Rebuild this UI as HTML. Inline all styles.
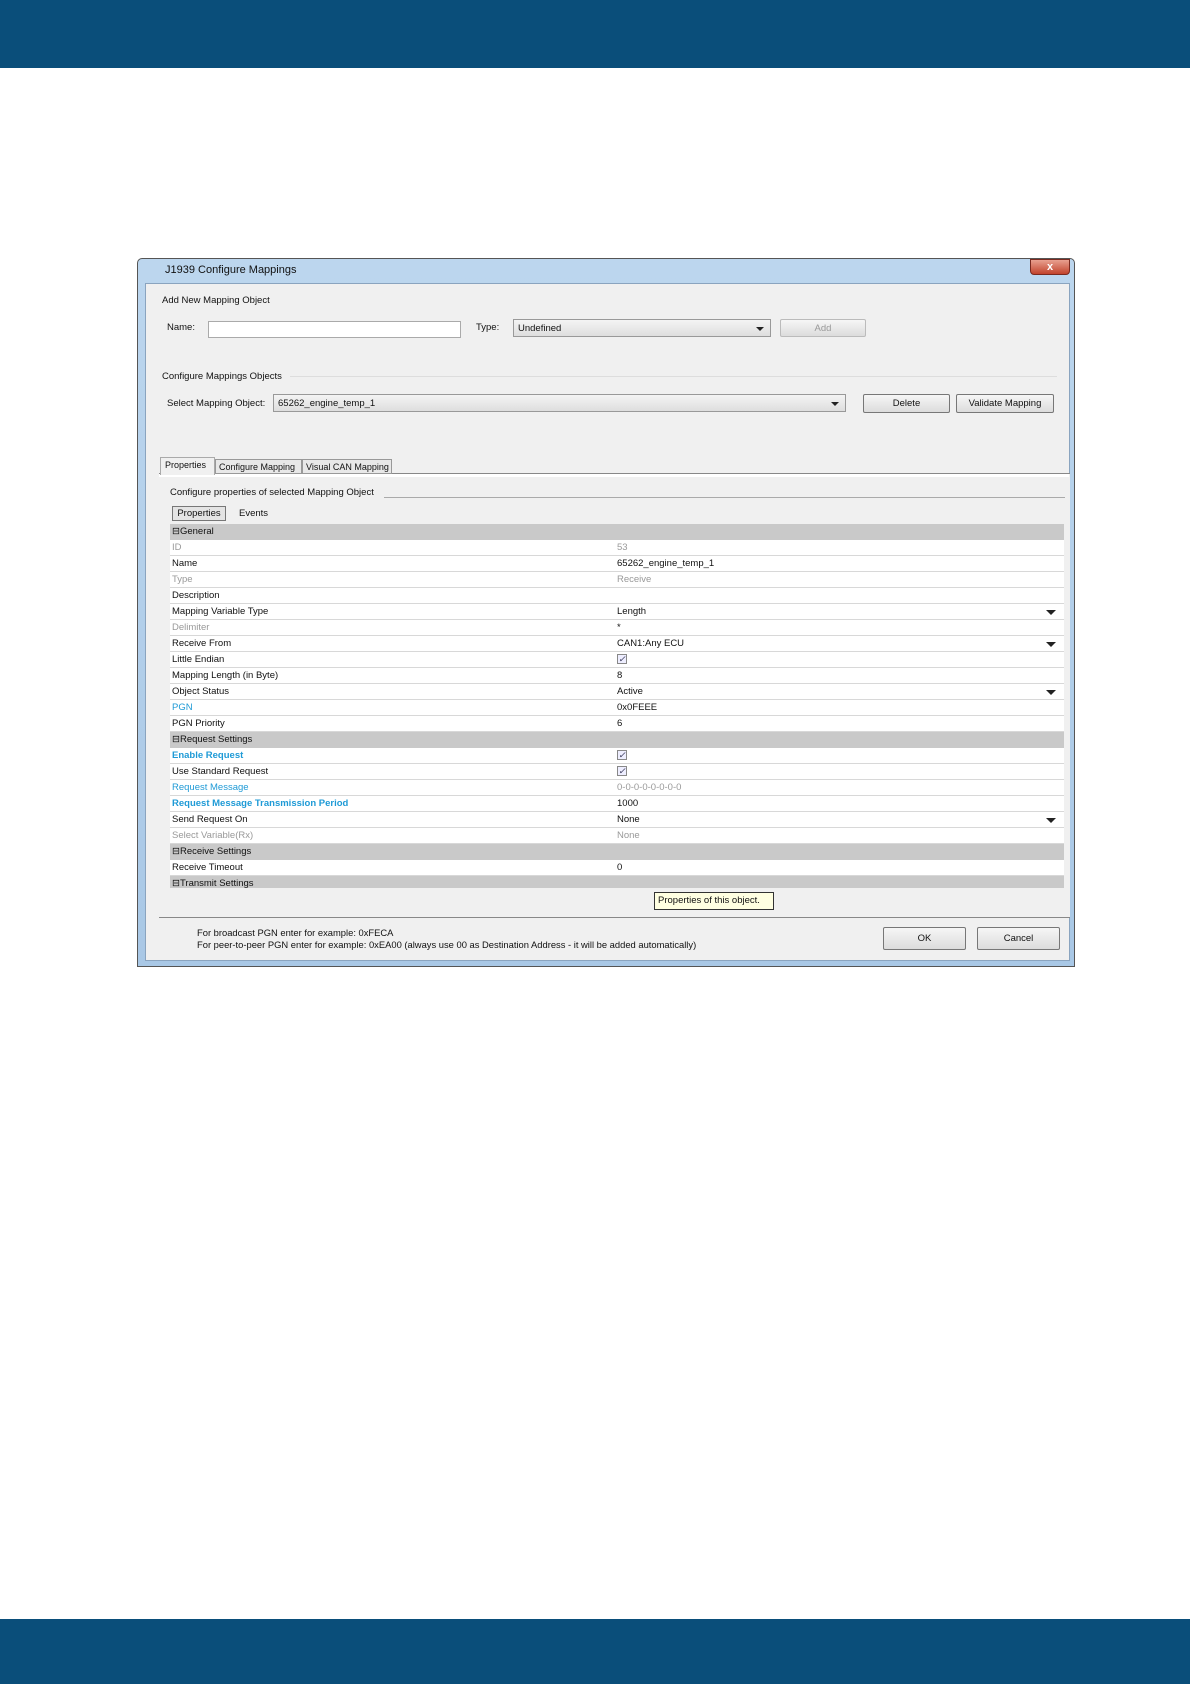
<!DOCTYPE html>
<html><head><style>
*{margin:0;padding:0;box-sizing:border-box}
body{width:1190px;height:1684px;background:#fff;position:relative;font-family:"Liberation Sans",sans-serif;font-size:9.5px;color:#111;overflow:hidden;white-space:nowrap}
.a{position:absolute}
.hdr{left:0;top:0;width:1190px;height:68px;background:#0a4e7a}
.ftr{left:0;top:1619px;width:1190px;height:65px;background:#0a4e7a}
.dlg{left:137px;top:258px;width:938px;height:709px;background:linear-gradient(#bcd6ee,#a9c8e6);border:1px solid #555;border-radius:5px 5px 0 0}
.inner{left:145px;top:283px;width:925px;height:678px;background:#f0f0f0;border:1px solid #8aa4bf}
.btn{background:linear-gradient(#f6f6f6,#dcdcdc);border:1px solid #777;border-radius:2px;text-align:center;line-height:17px}
.dd{background:linear-gradient(#f4f4f4,#dedede);border:1px solid #999;padding-left:4px;line-height:17px}
.arr{position:absolute;right:6px;top:7px;border-left:4px solid transparent;border-right:4px solid transparent;border-top:4px solid #222}
.row{position:absolute;left:170px;width:894px;height:16px;border-bottom:1px solid #d8d8d8;background:#fff;line-height:15px}
.row span{position:absolute;left:2px}
.row b{position:absolute;left:447px;font-weight:normal}
.sec{background:#c9c9c9;border-bottom:none}
.g{color:#999}.bl{color:#1e9ad6}
.cb{display:inline-block;width:10px;height:10px;border:1px solid #888;background:#eef;font-size:9px;line-height:8px;text-align:center;color:#335;margin-top:2px}
.tri{position:absolute;right:8px;top:6px;border-left:5px solid transparent;border-right:5px solid transparent;border-top:5px solid #222}
.tab{font-size:9px}
</style></head><body>
<div class="a hdr"></div>
<div class="a ftr"></div>
<div class="a dlg"></div>
<div class="a" style="left:165px;top:264px;font-size:11px">J1939 Configure Mappings</div>
<div class="a" style="left:1030px;top:259px;width:40px;height:16px;background:linear-gradient(#e8a090,#c2432c);border:1px solid #7a2a20;border-radius:0 0 4px 4px;color:#fff;font-weight:bold;text-align:center;line-height:14px;font-size:11px">x</div>
<div class="a inner"></div>
<div class="a" style="left:162px;top:295px">Add New Mapping Object</div>
<div class="a" style="left:167px;top:322px">Name:</div>
<div class="a" style="left:208px;top:321px;width:253px;height:17px;background:#fff;border:1px solid #aaa"></div>
<div class="a" style="left:476px;top:322px">Type:</div>
<div class="a dd" style="left:513px;top:319px;width:258px;height:18px">Undefined<i class="arr"></i></div>
<div class="a btn" style="left:780px;top:319px;width:86px;height:18px;color:#999;border-color:#bbb">Add</div>
<div class="a" style="left:162px;top:371px">Configure Mappings Objects</div>
<div class="a" style="left:290px;top:376px;width:767px;border-top:1px solid #ddd"></div>
<div class="a" style="left:167px;top:398px">Select Mapping Object:</div>
<div class="a dd" style="left:273px;top:394px;width:573px;height:18px">65262_engine_temp_1<i class="arr"></i></div>
<div class="a btn" style="left:863px;top:394px;width:87px;height:19px">Delete</div>
<div class="a btn" style="left:956px;top:394px;width:98px;height:19px">Validate Mapping</div>
<div class="a" style="left:159px;top:473px;width:911px;height:445px;background:#f0f0f0;border-top:1px solid #888;border-bottom:1px solid #888"></div>
<div class="a" style="left:159px;top:474px;width:910px;height:3px;background:#fff"></div>
<div class="a tab" style="left:160px;top:457px;width:55px;height:18px;background:#f0f0f0;border:1px solid #aaa;border-bottom:none;padding:2px 4px">Properties</div>
<div class="a tab" style="left:215px;top:459px;width:87px;height:15px;background:#e8e8e8;border:1px solid #999;padding:2px 3px">Configure Mapping</div>
<div class="a tab" style="left:302px;top:459px;width:90px;height:15px;background:#e8e8e8;border:1px solid #999;padding:2px 3px">Visual CAN Mapping</div>
<div class="a" style="left:170px;top:487px">Configure properties of selected Mapping Object</div>
<div class="a" style="left:384px;top:497px;width:681px;border-top:1px solid #aaa"></div>
<div class="a" style="left:172px;top:506px;width:54px;height:15px;border:1px solid #777;background:#e4e4e4;text-align:center;line-height:13px">Properties</div>
<div class="a" style="left:239px;top:508px">Events</div>
<div class="row sec" style="top:524px"><span>⊟General</span></div>
<div class="row" style="top:540px"><span class="g">ID</span><b class="g">53</b></div>
<div class="row" style="top:556px"><span>Name</span><b>65262_engine_temp_1</b></div>
<div class="row" style="top:572px"><span class="g">Type</span><b class="g">Receive</b></div>
<div class="row" style="top:588px"><span>Description</span></div>
<div class="row" style="top:604px"><span>Mapping Variable Type</span><b>Length</b><i class="tri"></i></div>
<div class="row" style="top:620px"><span class="g">Delimiter</span><b>*</b></div>
<div class="row" style="top:636px"><span>Receive From</span><b>CAN1:Any ECU</b><i class="tri"></i></div>
<div class="row" style="top:652px"><span>Little Endian</span><b><i class="cb">✓</i></b></div>
<div class="row" style="top:668px"><span>Mapping Length (in Byte)</span><b>8</b></div>
<div class="row" style="top:684px"><span>Object Status</span><b>Active</b><i class="tri"></i></div>
<div class="row" style="top:700px"><span class="bl">PGN</span><b>0x0FEEE</b></div>
<div class="row" style="top:716px"><span>PGN Priority</span><b>6</b></div>
<div class="row sec" style="top:732px"><span>⊟Request Settings</span></div>
<div class="row" style="top:748px"><span class="bl" style="font-weight:bold">Enable Request</span><b><i class="cb">✓</i></b></div>
<div class="row" style="top:764px"><span>Use Standard Request</span><b><i class="cb">✓</i></b></div>
<div class="row" style="top:780px"><span class="bl">Request Message</span><b class="g">0-0-0-0-0-0-0-0</b></div>
<div class="row" style="top:796px"><span class="bl" style="font-weight:bold">Request Message Transmission Period</span><b>1000</b></div>
<div class="row" style="top:812px"><span>Send Request On</span><b>None</b><i class="tri"></i></div>
<div class="row" style="top:828px"><span class="g">Select Variable(Rx)</span><b class="g">None</b></div>
<div class="row sec" style="top:844px"><span>⊟Receive Settings</span></div>
<div class="row" style="top:860px"><span>Receive Timeout</span><b>0</b></div>
<div class="row sec" style="top:876px;height:12px"><span>⊟Transmit Settings</span></div>
<div class="a" style="left:654px;top:892px;width:120px;height:18px;background:#ffffe1;border:1px solid #333;padding:2px 3px">Properties of this object.</div>
<div class="a" style="left:197px;top:927px;font-size:9.4px">For broadcast PGN enter for example: 0xFECA</div>
<div class="a" style="left:197px;top:939px;font-size:9.4px">For peer-to-peer PGN enter for example: 0xEA00 (always use 00 as Destination Address - it will be added automatically)</div>
<div class="a btn" style="left:883px;top:927px;width:83px;height:23px;line-height:21px">OK</div>
<div class="a btn" style="left:977px;top:927px;width:83px;height:23px;line-height:21px">Cancel</div>
</body></html>
